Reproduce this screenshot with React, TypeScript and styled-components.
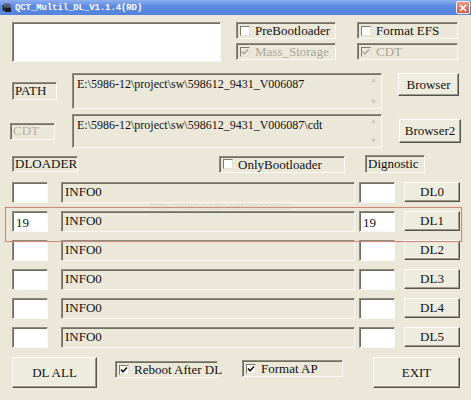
import React from 'react';
import styled, { createGlobalStyle, css } from 'styled-components';

const GlobalStyle = createGlobalStyle`
  html, body {
    margin: 0;
    padding: 0;
    background: #ebe8d9;
    font-family: "Liberation Serif", "Times New Roman", Times, "DejaVu Serif", serif;
  }
  * { box-sizing: border-box; }
`;

const sunken = css`
  border: 1px solid;
  border-color: #8e8b7d #fbfaf5 #fbfaf5 #8e8b7d;
  box-shadow: inset 1px 1px 0 #6f6c60;
`;

const raised = css`
  border: 1px solid;
  border-color: #fdfcf7 #55534a #55534a #fdfcf7;
  box-shadow: inset -1px -1px 0 #9c998b;
`;

const Window = styled.div`
  position: relative;
  width: 471px;
  height: 400px;
  overflow: hidden;
  background: #ebe8d9;
  font-family: "Liberation Serif", "Times New Roman", Times, "DejaVu Serif", serif;
  font-size: 13px;
  color: #111;
  display: flex;
  flex-direction: column;
`;

const TitleBar = styled.div`
  height: 15px;
  flex: none;
  display: flex;
  align-items: center;
  padding: 0 1px 0 2px;
  background: linear-gradient(180deg, #8fb0ee 0%, #5d8ae2 40%, #5583dd 100%);
  color: #fff;
`;

const TitleText = styled.span`
  font-family: "Liberation Mono", monospace;
  font-size: 9px;
  font-weight: bold;
  letter-spacing: -0.1px;
  margin-left: 3px;
  flex: 1;
`;

const CloseBox = styled.div`
  width: 14px;
  height: 13px;
  border: 1px solid #f4f0f0;
  border-radius: 2px;
  background: linear-gradient(180deg, #e79a88, #cf5c45);
  display: flex;
  align-items: center;
  justify-content: center;
`;

const Body = styled.div`
  display: flex;
  flex-direction: column;
`;

const TopSection = styled.div`
  display: flex;
  margin-top: 7px;
  padding-left: 12px;
  height: 40px;
`;

const WhiteBox = styled.div`
  ${sunken};
  width: 209px;
  height: 40px;
  background: #fff;
`;

const CheckGrid = styled.div`
  display: grid;
  grid-template-columns: 100px 101px;
  grid-template-rows: 16px 16px;
  column-gap: 21px;
  row-gap: 5px;
  margin-left: 15px;
`;

const CheckFrame = styled.label<{ $w?: number }>`
  ${sunken};
  display: flex;
  align-items: center;
  gap: 5px;
  padding-left: 3px;
  height: 17px;
  width: ${(p) => (p.$w ? `${p.$w}px` : 'auto')};
  white-space: nowrap;
`;

const CheckSquare = styled.span<{ $disabled?: boolean }>`
  flex: none;
  width: 10px;
  height: 10px;
  border: 1px solid;
  border-color: #7e7b70 #e4e1d6 #e4e1d6 #7e7b70;
  background: ${(p) => (p.$disabled ? '#ebe8d9' : '#fff')};
  display: flex;
  align-items: center;
  justify-content: center;
`;

const CheckLabel = styled.span<{ $disabled?: boolean }>`
  color: ${(p) => (p.$disabled ? '#a9a79b' : '#111')};
  line-height: 1;
`;

const PathRow = styled.div<{ $top: number; $left: number }>`
  display: flex;
  align-items: center;
  margin-top: ${(p) => p.$top}px;
  padding-left: ${(p) => p.$left}px;
`;

const StaticLabel = styled.div<{ $w: number; $h: number; $disabled?: boolean }>`
  ${sunken};
  width: ${(p) => p.$w}px;
  height: ${(p) => p.$h}px;
  display: flex;
  align-items: center;
  padding-left: 2px;
  color: ${(p) => (p.$disabled ? '#b3b1a6' : '#111')};
  flex: none;
`;

const PathField = styled.div<{ $h: number; $ml: number }>`
  ${sunken};
  margin-left: ${(p) => p.$ml}px;
  width: 310px;
  height: ${(p) => p.$h}px;
  display: flex;
  flex: none;
`;

const PathText = styled.div`
  flex: 1;
  padding: 3px 0 0 4px;
  white-space: nowrap;
  overflow: hidden;
  font-size: 12px;
`;

const ScrollCol = styled.div`
  width: 15px;
  display: flex;
  flex-direction: column;
  justify-content: space-between;
  align-items: center;
  padding: 3px 0 2px;
  color: #c9c6b8;
  font-size: 7px;
  line-height: 1;
`;

const Button = styled.div<{ $w: number; $h: number; $ml?: number }>`
  ${raised};
  width: ${(p) => p.$w}px;
  height: ${(p) => p.$h}px;
  margin-left: ${(p) => p.$ml ?? 0}px;
  background: #eeebdf;
  display: flex;
  align-items: center;
  justify-content: center;
  flex: none;
  color: #111;
`;

const HeaderRow = styled.div`
  display: flex;
  align-items: center;
  margin-top: 7px;
  height: 18px;
  padding-left: 12px;
`;

const DlList = styled.div`
  display: flex;
  flex-direction: column;
  gap: 8px;
  margin-top: 9px;
`;

const DlRow = styled.div`
  display: flex;
  align-items: flex-start;
  height: 21px;
  padding-left: 12px;
`;

const SmallBox = styled.div<{ $ml?: number }>`
  ${sunken};
  width: 36px;
  height: 21px;
  margin-left: ${(p) => p.$ml ?? 0}px;
  background: #fff;
  padding: 3px 0 0 3px;
  flex: none;
`;

const InfoField = styled.div`
  ${sunken};
  border-right-color: #f6f4ec;
  margin-left: 13px;
  width: 294px;
  height: 21px;
  padding: 1px 0 0 3px;
  flex: none;
`;

const BottomRow = styled.div`
  display: flex;
  align-items: flex-start;
  margin-top: 9px;
  padding-left: 12px;
`;

const Highlight = styled.div`
  position: absolute;
  left: 5px;
  top: 207px;
  width: 457px;
  height: 35px;
  border: 1px solid #c98c7c;
  box-shadow: 0 0 1px #e3b3a6;
  pointer-events: none;
`;

const Watermark = styled.div`
  position: absolute;
  left: 150px;
  top: 201px;
  font-family: "Liberation Sans", Arial, sans-serif;
  font-size: 10px;
  color: rgba(215, 175, 170, 0.3);
  letter-spacing: 0.5px;
  pointer-events: none;
`;

function Tick({ color }: { color: string }) {
  return (
    <svg width="8" height="8" viewBox="0 0 8 8">
      <path d="M1 3.5 L3 5.8 L7 1.5" fill="none" stroke={color} strokeWidth="1.6" />
    </svg>
  );
}

function Check({
  label,
  checked,
  disabled,
  w,
}: {
  label: string;
  checked?: boolean;
  disabled?: boolean;
  w?: number;
}) {
  return (
    <CheckFrame $w={w}>
      <CheckSquare $disabled={disabled}>
        {checked && <Tick color={disabled ? '#aaa89c' : '#111'} />}
      </CheckSquare>
      <CheckLabel $disabled={disabled}>{label}</CheckLabel>
    </CheckFrame>
  );
}

const rows = [
  { id: 0, value: '' },
  { id: 1, value: '19' },
  { id: 2, value: '' },
  { id: 3, value: '' },
  { id: 4, value: '' },
  { id: 5, value: '' },
];

export default function App() {
  return (
    <>
      <GlobalStyle />
      <Window>
        <TitleBar>
          <svg width="10" height="10" viewBox="0 0 10 10">
            <rect x="0.5" y="2" width="8" height="6" fill="#2a2f3c" />
            <rect x="2" y="0.5" width="6" height="4" fill="#5a6274" />
            <rect x="3" y="5" width="6" height="4" fill="#1b1e26" />
          </svg>
          <TitleText>QCT_Multil_DL_V1.1.4(RD)</TitleText>
          <CloseBox>
            <svg width="8" height="8" viewBox="0 0 8 8">
              <path d="M1 1 L7 7 M7 1 L1 7" stroke="#fff" strokeWidth="1.6" />
            </svg>
          </CloseBox>
        </TitleBar>
        <Body>
          <TopSection>
            <WhiteBox />
            <CheckGrid>
              <Check label="PreBootloader" />
              <Check label="Format EFS" />
              <Check label="Mass_Storage" checked disabled />
              <Check label="CDT" checked disabled />
            </CheckGrid>
          </TopSection>

          <PathRow $top={11} $left={12}>
            <StaticLabel $w={45} $h={18}>PATH</StaticLabel>
            <PathField $h={36} $ml={15}>
              <PathText>E:\5986-12\project\sw\598612_9431_V006087</PathText>
              <ScrollCol>
                <span>▲</span>
                <span>▼</span>
              </ScrollCol>
            </PathField>
            <Button $w={61} $h={23} $ml={16} style={{ alignSelf: 'flex-start' }}>
              Browser
            </Button>
          </PathRow>

          <PathRow $top={5} $left={10}>
            <StaticLabel $w={45} $h={17} $disabled>CDT</StaticLabel>
            <PathField $h={34} $ml={17}>
              <PathText>E:\5986-12\project\sw\598612_9431_V006087\cdt</PathText>
              <ScrollCol>
                <span>▲</span>
                <span>▼</span>
              </ScrollCol>
            </PathField>
            <Button $w={62} $h={24} $ml={17}>
              Browser2
            </Button>
          </PathRow>

          <HeaderRow>
            <StaticLabel $w={66} $h={16}>DLOADER</StaticLabel>
            <div style={{ marginLeft: 141 }}>
              <Check label="OnlyBootloader" w={126} />
            </div>
            <StaticLabel $w={60} $h={18} style={{ marginLeft: 20 }}>
              Dignostic
            </StaticLabel>
          </HeaderRow>

          <DlList>
            {rows.map((r) => (
              <DlRow key={r.id}>
                <SmallBox>{r.value}</SmallBox>
                <InfoField>INFO0</InfoField>
                <SmallBox $ml={4}>{r.value}</SmallBox>
                <Button $w={56} $h={20} $ml={9}>
                  DL{r.id}
                </Button>
              </DlRow>
            ))}
          </DlList>

          <BottomRow>
            <Button $w={85} $h={31}>DL ALL</Button>
            <div style={{ marginLeft: 18, marginTop: 4 }}>
              <Check label="Reboot After DL" checked w={103} />
            </div>
            <div style={{ marginLeft: 24, marginTop: 3 }}>
              <Check label="Format AP" checked w={101} />
            </div>
            <Button $w={87} $h={31} $ml={30}>EXIT</Button>
          </BottomRow>
        </Body>
        <Highlight />
        <Watermark>http://blog.csdn.net/xxxxxxxx</Watermark>
      </Window>
    </>
  );
}
